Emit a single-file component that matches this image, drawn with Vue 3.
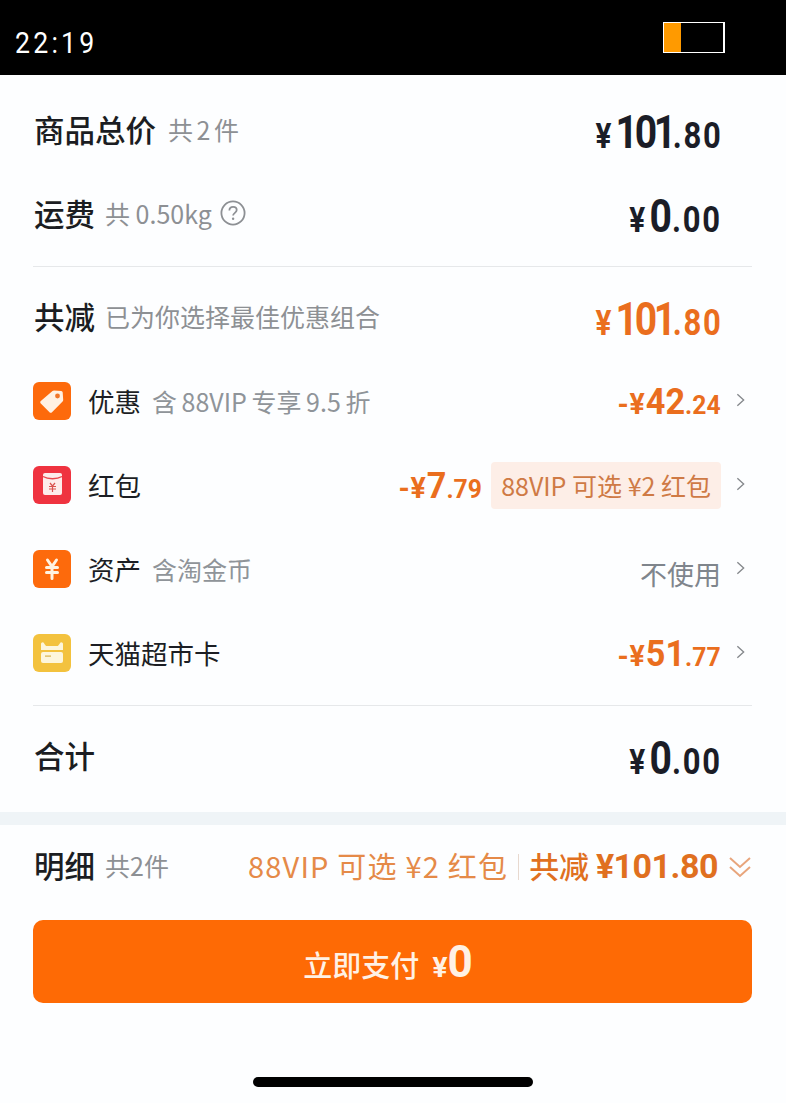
<script setup>
const discounts = [
  { name: '优惠', note: '含 88VIP 专享 9.5 折', sign: '-¥', big: '42', small: '.24', icon: 'tag' },
  { name: '红包', note: '', sign: '-¥', big: '7', small: '.79', tag: '88VIP 可选 ¥2 红包', icon: 'packet' },
  { name: '资产', note: '含淘金币', plain: '不使用', icon: 'coin' },
  { name: '天猫超市卡', note: '', sign: '-¥', big: '51', small: '.77', icon: 'card' }
]
</script>

<template>
  <div class="page">
    <div class="statusbar">
      <span class="time">22:19</span>
      <span class="battery"><i class="level"></i></span>
    </div>

    <div class="summary">
      <div class="row">
        <div class="left"><span class="title">商品总价</span><span class="note first">共 2 件</span></div>
        <div class="price"><span class="cur">¥</span><span class="big ones">101</span><span class="small">.80</span></div>
      </div>
      <div class="row">
        <div class="left">
          <span class="title">运费</span><span class="note">共 0.50kg</span>
          <svg class="help" viewBox="0 0 26 26" width="26" height="26">
            <circle cx="13" cy="13" r="11.6" fill="none" stroke="#8d9094" stroke-width="1.8" />
            <path d="M9.4 10.4c0-2.2 1.6-3.6 3.7-3.6s3.6 1.3 3.6 3.2c0 2.8-3.6 2.9-3.6 5.6" fill="none" stroke="#8d9094" stroke-width="1.8" />
            <circle cx="13.1" cy="18.8" r="1.2" fill="#8d9094" />
          </svg>
        </div>
        <div class="price"><span class="cur">¥</span><span class="big">0</span><span class="small">.00</span></div>
      </div>

      <div class="line"></div>

      <div class="row">
        <div class="left"><span class="title">共减</span><span class="note">已为你选择最佳优惠组合</span></div>
        <div class="price orange"><span class="cur">¥</span><span class="big ones">101</span><span class="small">.80</span></div>
      </div>

      <div class="row" v-for="item in discounts" :key="item.name">
        <div class="left item">
          <svg class="icon" viewBox="0 0 38 38" width="38" height="38">
            <template v-if="item.icon === 'tag'">
              <rect width="38" height="38" rx="6" fill="#fd6a0c" />
              <path d="M21 8.500l7.200.6c.9.1 1.400.7 1.500 1.500l.5 7.400c0 .6-.2 1.100-.6 1.500L19 30.200c-.7.7-1.800.7-2.500 0l-8.700-8.800c-.7-.7-.7-1.800 0-2.500L19.500 9.100c.4-.4 1-.6 1.500-.6z" fill="#fff1e4" />
              <circle cx="24.500" cy="14" r="2.400" fill="#f0762a" />
            </template>
            <template v-else-if="item.icon === 'packet'">
              <rect width="38" height="38" rx="6" fill="#ef3340" />
              <rect x="10" y="7" width="19" height="22" rx="2" fill="#fdeceb" />
              <path d="M10 10.500c5 3 14 3 19 0" fill="none" stroke="#e8474c" stroke-width="1.300" />
              <path d="M17 17l2.500 3 2.500-3M16 20.500h7M16 23h7M19.500 20v6" fill="none" stroke="#d9534f" stroke-width="1.200" />
            </template>
            <template v-else-if="item.icon === 'coin'">
              <rect width="38" height="38" rx="6" fill="#fd6a0c" />
              <path d="M14.500 10l4.500 6.500 4.500-6.500M13.500 17.500h11M13.500 22.500h11M19 16.500v12" fill="none" stroke="#fff3e2" stroke-width="3" stroke-linecap="round" />
            </template>
            <template v-else>
              <rect width="38" height="38" rx="6" fill="#f3c23e" />
              <path d="M8 10c0-1 .8-1.800 1.800-1.800 1.500 0 2 3.800 4.200 3.800h10c2.200 0 2.700-3.800 4.200-3.800 1 0 1.800.8 1.800 1.800v6H8z" fill="#fdf6dc" />
              <rect x="8" y="18" width="22" height="11" rx="2" fill="#fdf6dc" />
              <rect x="12" y="21.500" width="6" height="1.200" fill="#d8b24a" />
            </template>
          </svg>
          <span class="name">{{ item.name }}</span>
          <span v-if="item.note" class="subnote">{{ item.note }}</span>
        </div>
        <div class="right">
          <span v-if="item.plain" class="plain">{{ item.plain }}</span>
          <div v-else class="price orange minor">
            <span class="cur">{{ item.sign }}</span><span class="big">{{ item.big }}</span><span class="small">{{ item.small }}</span>
          </div>
          <span v-if="item.tag" class="tag">{{ item.tag }}</span>
          <svg class="arrow" viewBox="0 0 10 16" width="10" height="16">
            <path d="M1.500 1.500l7 6.500-7 6.500" fill="none" stroke="#85888c" stroke-width="1.500" />
          </svg>
        </div>
      </div>

      <div class="line"></div>

      <div class="row">
        <div class="left"><span class="title">合计</span></div>
        <div class="price"><span class="cur">¥</span><span class="big">0</span><span class="small">.00</span></div>
      </div>
    </div>

    <div class="band"></div>

    <div class="footer">
      <div class="detail">
        <div class="left"><span class="title">明细</span><span class="note">共2件</span></div>
        <div class="detail-right">
          <span class="vip">88VIP 可选 ¥2 红包</span>
          <i class="sep"></i>
          <span class="total">共减 <b>¥101.80</b></span>
          <svg class="double" viewBox="0 0 24 24" width="24" height="24">
            <path d="M2 3l10 9 10-9M2 12l10 9 10-9" fill="none" stroke="#e8a57c" stroke-width="2" />
          </svg>
        </div>
      </div>
      <div class="pay"><span class="pay-text">立即支付</span><span class="pay-cur">¥</span><span class="pay-num">0</span></div>
    </div>

    <div class="home"><i></i></div>
  </div>
</template>

<style scoped>
.page {
  width: 786px;
  height: 1103px;
  overflow: hidden;
  background: #fdfeff;
  font-family: "Noto Sans CJK SC", "Noto Sans", sans-serif;
  color: #1b1d22;
}
.statusbar {
  height: 75px;
  background: #000;
  display: flex;
  justify-content: space-between;
  padding: 0 61px 0 15px;
  box-sizing: border-box;
}
.time {
  margin-top: 25px;
  font: 400 29px/37px Roboto, sans-serif;
  letter-spacing: 3.500px;
  color: #fff;
  transform: scaleX(.92);
  transform-origin: left;
}
.battery {
  width: 62px;
  height: 31px;
  margin-top: 22px;
  border: 1px solid #fff;
  border-right-width: 2px;
  box-sizing: border-box;
}
.level {
  display: block;
  width: 17px;
  height: 100%;
  background: #ff9a00;
}
.summary {
  padding: 14px 34px 0;
}
.row {
  height: 84px;
  display: flex;
  align-items: center;
  justify-content: space-between;
}
.left {
  display: flex;
  align-items: center;
  padding-bottom: 4px;
}
.left.item {
  padding-bottom: 2px;
  margin-left: -1px;
}
.title {
  font-size: 30.500px;
  font-weight: 500;
  line-height: 40px;
}
.note {
  margin-left: 10px;
  font-size: 25px;
  line-height: 40px;
  color: #8d9094;
}
.note.first {
  margin-left: 12px;
  word-spacing: -2px;
}
.help {
  margin-left: 8px;
}
.price {
  margin-right: 30px;
  display: flex;
  align-items: baseline;
  font-family: Roboto, sans-serif;
  font-weight: 700;
  color: #1b1d27;
  padding-top: 2px;
  transform: scaleX(.85);
  transform-origin: right;
}
.cur {
  font-size: 35px;
  margin-right: 5px;
}
.big {
  font-size: 46px;
}
.ones {
  letter-spacing: -4px;
}
.small {
  font-size: 36.500px;
  letter-spacing: 2px;
}
.orange {
  color: #ea6e1e;
}
.minor {
  margin-right: 0;
  padding-top: 0;
  transform: scaleX(.95);
}
.minor .cur {
  font-size: 30px;
  letter-spacing: 1px;
  margin-right: 0;
}
.minor .big {
  font-size: 36px;
}
.minor .small {
  font-size: 26px;
  letter-spacing: 0;
}
.icon {
  flex: none;
  margin-right: 17px;
}
.name {
  font-size: 26.500px;
  line-height: 36px;
  color: #1c1e24;
}
.subnote {
  margin-left: 11px;
  font-size: 25px;
  line-height: 36px;
  word-spacing: -1px;
  color: #8f9499;
}
.right {
  display: flex;
  align-items: center;
}
.tag {
  margin: -2px 0 0 9px;
  padding: 0 10px;
  height: 47px;
  line-height: 47px;
  font-size: 25px;
  color: #cf7a45;
  background: #fdeee7;
  border-radius: 4px;
}
.plain {
  font-size: 27px;
  color: #7f858c;
  padding-top: 6px;
}
.arrow {
  width: 9px;
  margin: -4px 7px 0 15px;
}
.line {
  height: 1px;
  margin: 9px 0 9px -1px;
  background: #e6e8ea;
}
.band {
  height: 13px;
  margin-top: 13px;
  background: #eff4f7;
}
.footer {
  padding: 0 34px;
}
.detail {
  height: 84px;
  display: flex;
  align-items: center;
  justify-content: space-between;
}
.detail-right {
  display: flex;
  align-items: center;
}
.vip {
  font-size: 29px;
  letter-spacing: 1.200px;
  color: #e58a48;
  padding-bottom: 4px;
}
.sep {
  width: 1px;
  height: 26px;
  margin: 0 10px;
  background: #e8d9cf;
}
.total {
  font-size: 30px;
  font-weight: 500;
  color: #e0701f;
  padding-bottom: 4px;
}
.total b {
  font-family: Roboto, sans-serif;
  font-size: 34px;
  font-weight: 700;
  letter-spacing: -0.500px;
}
.double {
  margin-left: 10px;
}
.pay {
  height: 83px;
  box-sizing: border-box;
  margin-top: 11px;
  margin-left: -1px;
  padding: 6px 9px 0 0;
  border-radius: 10px;
  background: #fe6a05;
  color: #fff1e4;
  display: flex;
  align-items: baseline;
  justify-content: center;
  line-height: 77px;
}
.pay-text {
  font-size: 29px;
  font-weight: 500;
}
.pay-cur {
  margin-left: 13px;
  font: 700 28px Roboto, sans-serif;
}
.pay-num {
  font: 700 44px Roboto, sans-serif;
}
.home {
  display: flex;
  justify-content: center;
  margin-top: 74px;
}
.home i {
  width: 280px;
  height: 10px;
  border-radius: 5px;
  background: #000;
}
</style>
